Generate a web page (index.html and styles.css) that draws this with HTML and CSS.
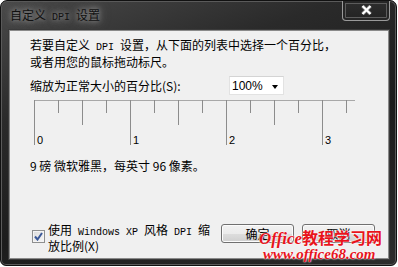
FILE: index.html
```html
<!DOCTYPE html>
<html lang="zh-CN">
<head>
  <meta charset="UTF-8" />
  <title>自定义 DPI 设置</title>
  <link rel="stylesheet" href="styles.css">
</head>
<body>

  <div class="window">
    <div class="titlebar">
      <span class="title">自定义<span class="latin"> DPI </span>设置</span>
      <div class="close">
        <svg width="11" height="10" viewBox="0 0 11 10">
          <path d="M1.5 1 L9.5 9 M9.5 1 L1.5 9" stroke="#5a5a5a" stroke-width="4" />
          <path d="M1.5 1 L9.5 9 M9.5 1 L1.5 9" stroke="#fff" stroke-width="2.4" />
        </svg>
      </div>
    </div>

    <div class="client">
      <p class="intro">若要自定义<span class="latin"> DPI </span>设置，从下面的列表中选择一个百分比，<br>或者用您的鼠标拖动标尺。</p>

      <div class="scale-row">
        <label class="scale-label">缩放为正常大小的百分比(S):</label>
        <div class="select">
          <span>100%</span>
          <span class="arrow"></span>
        </div>
      </div>

      <!-- ruler -->
      <svg class="ruler" width="322" height="46" viewBox="0 0 322 46">
        <g stroke="#8c8c8c" stroke-width="1">
          <line x1="0" y1="0.5" x2="321" y2="0.5" stroke="#a8a8a8" />
          <line x1="0.5" y1="0" x2="0.5" y2="45" />
          <line x1="24.5" y1="0" x2="24.5" y2="13" />
          <line x1="48.5" y1="0" x2="48.5" y2="25" />
          <line x1="72.5" y1="0" x2="72.5" y2="13" />
          <line x1="96.5" y1="0" x2="96.5" y2="45" />
          <line x1="120.5" y1="0" x2="120.5" y2="13" />
          <line x1="144.5" y1="0" x2="144.5" y2="25" />
          <line x1="168.5" y1="0" x2="168.5" y2="13" />
          <line x1="192.5" y1="0" x2="192.5" y2="45" />
          <line x1="216.5" y1="0" x2="216.5" y2="13" />
          <line x1="240.5" y1="0" x2="240.5" y2="25" />
          <line x1="264.5" y1="0" x2="264.5" y2="13" />
          <line x1="288.5" y1="0" x2="288.5" y2="45" />
          <line x1="312.5" y1="0" x2="312.5" y2="13" />
        </g>
        <g class="ruler-num">
          <text x="3" y="44">0</text>
          <text x="99" y="44">1</text>
          <text x="195" y="44">2</text>
          <text x="291" y="44">3</text>
        </g>
      </svg>

      <p class="font-info">9 磅 微软雅黑，每英寸 96 像素。</p>

      <div class="bottom-row">
        <span class="checkbox">
          <svg width="9" height="9" viewBox="0 0 9 9">
            <path d="M1 4.5 L3.5 7.5 L8 1" fill="none" stroke="#3b5998" stroke-width="2" />
          </svg>
        </span>
        <span class="check-label">使用<span class="latin"> Windows XP </span>风格<span class="latin"> DPI </span>缩<br>放比例(X)</span>
        <button class="btn btn-ok">确定</button>
        <button class="btn">取消</button>
      </div>

      <div class="watermark">
        <div class="wm-title"><span class="wm-office">Office</span>教程学习网</div>
        <div class="wm-url">www.office68.com</div>
      </div>
    </div>
  </div>

</body>
</html>
```

FILE: styles.css
```css
body {
  margin: 0;
  background: #fff;
  font-family: "Noto Sans CJK SC", "Noto Sans", sans-serif;
  font-size: 12px;
  color: #000;
}
.window {
  width: 397px;
  height: 266px;
  box-sizing: border-box;
  display: flex;
  flex-direction: column;
  border-radius: 7px 7px 6px 6px;
  border: 1px solid #111;
  background: linear-gradient(160deg, #4a4a4a 0%, #2a2a2a 30%, #1c1c1c 60%, #2c2c2c 100%);
  box-shadow: inset 0 0 0 1px #5a5a5a;
}
.titlebar {
  height: 29px;
  display: flex;
  justify-content: space-between;
  align-items: flex-start;
}
.title {
  margin: 7px 0 0 9px;
  line-height: 14px;
  color: #111;
  white-space: pre;
  text-shadow: 0 0 5px #9a9a9a, 0 0 9px #808080, 0 0 12px #666;
}
.close {
  width: 46px;
  height: 19px;
  margin-right: 6px;
  display: flex;
  align-items: center;
  justify-content: center;
  border: 1px solid #9a9a9a;
  border-top: none;
  border-radius: 0 0 4px 4px;
  background: linear-gradient(#2e2e2e, #222);
  box-shadow: inset 0 0 0 2px #262626, inset 0 0 0 3px #5c5c5c;
}
.close svg {
  margin-top: -2px;
}
.client {
  position: relative;
  flex: 1;
  margin: 0 7px 6px 8px;
  padding: 7px 13px 6px 20px;
  box-sizing: border-box;
  display: flex;
  flex-direction: column;
  background: #f0f0f0;
  border: 1px solid #8a8a8a;
  box-shadow: 0 0 0 1px #3a3a3a;
}
.latin {
  font-family: "Liberation Mono", monospace;
  font-size: 10px;
  white-space: pre;
}
.intro {
  margin: 0;
  line-height: 14px;
}
.scale-row {
  margin-top: 7px;
  height: 19px;
  display: flex;
  align-items: center;
}
.scale-label {
  width: 199px;
  flex: none;
}
.select {
  width: 55px;
  height: 19px;
  box-sizing: border-box;
  display: flex;
  align-items: center;
  justify-content: space-between;
  padding: 0 5px 0 2px;
  background: #fff;
  border: 1px solid #e2e2e2;
  border-top-color: #d4d4d4;
  font-family: "Liberation Sans", "Noto Sans CJK SC", sans-serif;
}
.arrow {
  width: 0;
  height: 0;
  border-left: 3.5px solid transparent;
  border-right: 3.5px solid transparent;
  border-top: 4px solid #000;
  margin-top: 2px;
}
.ruler {
  display: block;
  margin: 5px 0 0 4px;
}
.ruler-num text {
  font-family: "Liberation Sans", sans-serif;
  font-size: 11px;
  fill: #000;
}
.font-info {
  margin: 13px 0 0 0;
  line-height: 14px;
  font-family: "Noto Sans CJK SC", "Liberation Sans", sans-serif;
}
.bottom-row {
  margin-top: auto;
  display: flex;
  align-items: flex-start;
}
.checkbox {
  width: 13px;
  height: 13px;
  box-sizing: border-box;
  margin: 7px 3px 0 2px;
  display: flex;
  align-items: center;
  justify-content: center;
  border: 1px solid #8e8f8f;
  background: linear-gradient(135deg, #dcdcdc, #f6f6f6);
  box-shadow: inset 0 0 0 1px #f4f4f4;
}
.check-label {
  line-height: 13px;
}
.btn {
  width: 73px;
  height: 19px;
  margin-top: 1px;
  padding: 0;
  font-family: "Noto Sans CJK SC", sans-serif;
  font-size: 12px;
  color: #000;
  border: 1px solid #707070;
  border-radius: 3px;
  background: linear-gradient(#f2f2f2 0%, #ebebeb 50%, #dddddd 51%, #cfcfcf 100%);
  box-shadow: inset 0 0 0 1px #fcfcfc;
}
.btn-ok {
  margin-left: auto;
  margin-right: 8px;
}

/* watermark */
.watermark {
  position: absolute;
  left: 249px;
  top: 197px;
  color: #e8141c;
  text-shadow: 0 0 2px #fff, 0 0 1px #fff;
  pointer-events: none;
}
.wm-title {
  font-family: "Noto Sans CJK SC", sans-serif;
  font-weight: bold;
  font-size: 16px;
  line-height: 18px;
  white-space: nowrap;
}
.wm-office {
  font-family: "Liberation Serif", serif;
  font-style: italic;
  font-size: 17px;
}
.wm-url {
  margin: -1px 0 0 4px;
  font-family: "Liberation Serif", serif;
  font-style: italic;
  font-weight: bold;
  font-size: 15px;
  line-height: 15px;
}
```
